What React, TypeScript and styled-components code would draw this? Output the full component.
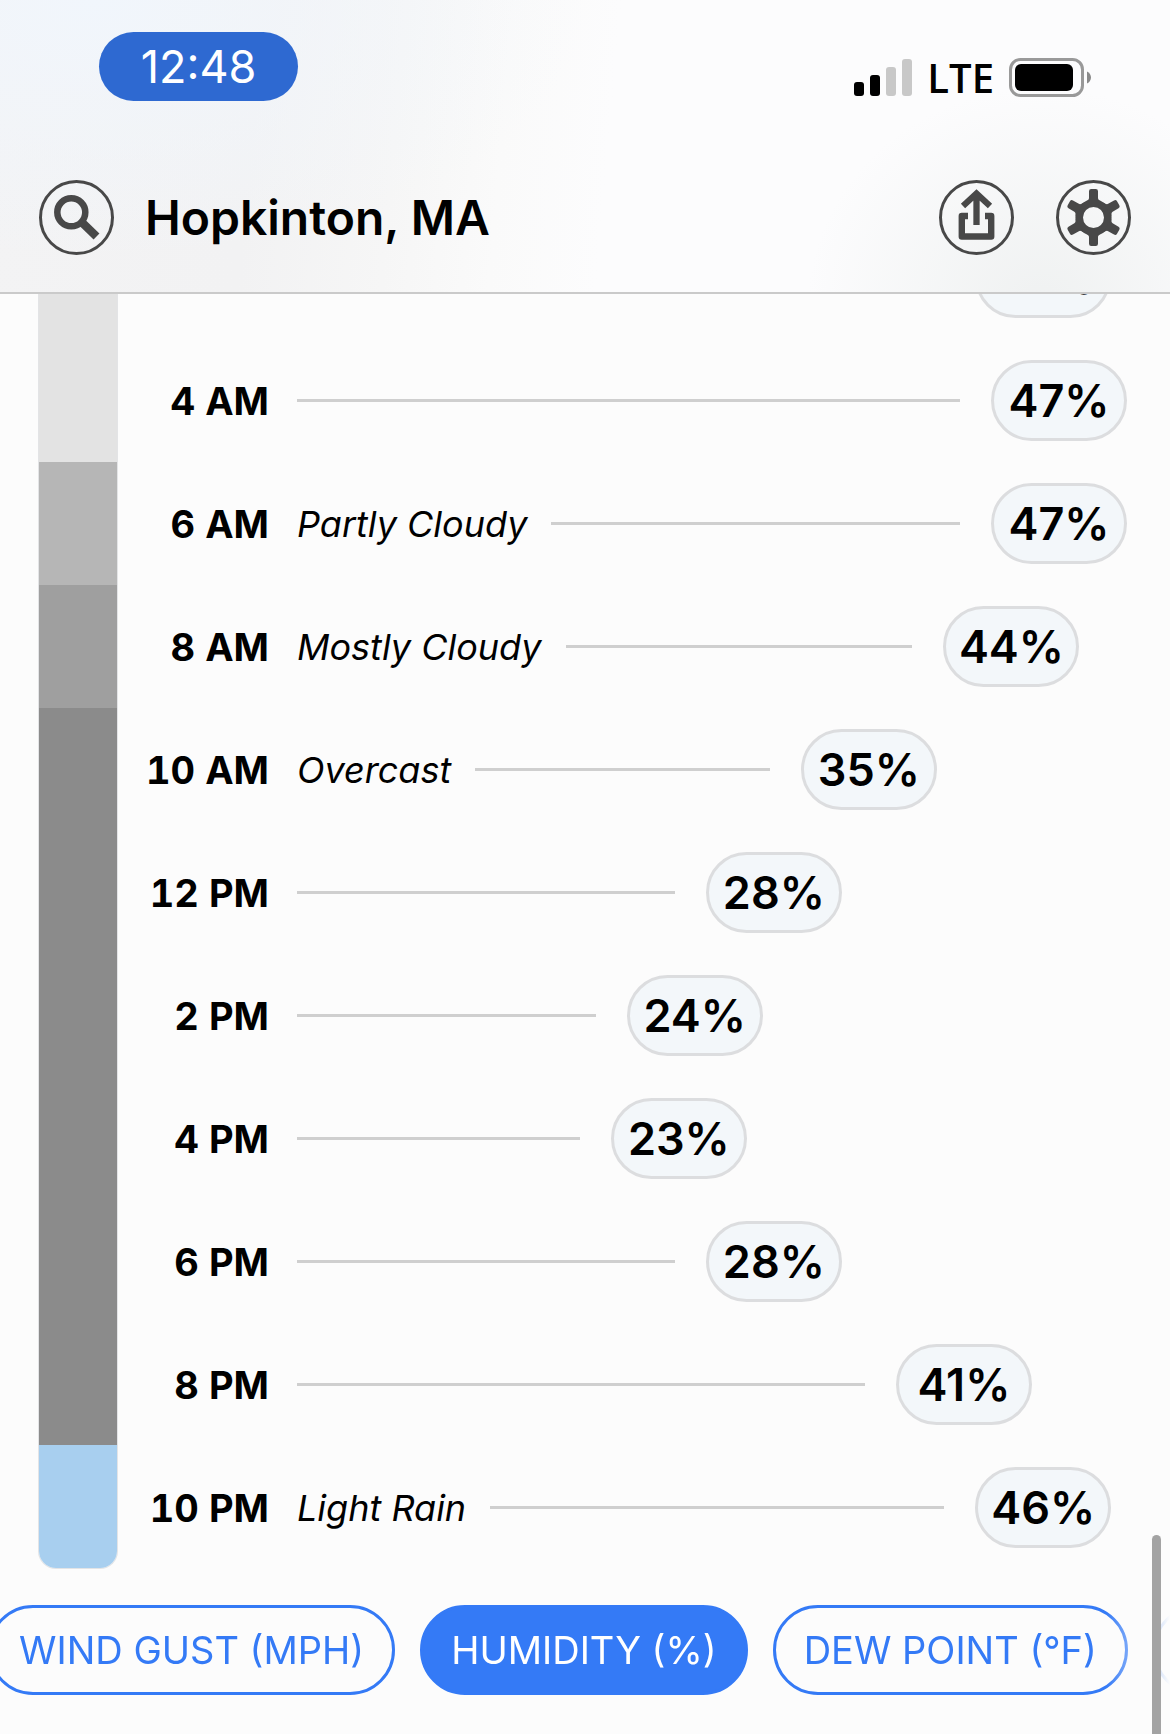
import React, { useState } from "react";
import styled, { createGlobalStyle } from "styled-components";

const GlobalStyle = createGlobalStyle`
  *, *::before, *::after { box-sizing: border-box; }
  body {
    margin: 0;
    background: #fcfcfc;
    color: #000;
    font-family: Inter, "Liberation Sans", sans-serif;
  }
  button { font: inherit; color: inherit; cursor: pointer; }
`;

const Screen = styled.div`
  position: relative;
  min-height: 100vh;
  overflow: hidden;
`;

const Header = styled.header`
  position: relative;
  z-index: 1;
  border-bottom: 2px solid #cacaca;
  background:
    radial-gradient(ellipse 20% 75% at 89% 105%, #eff1f1 0%, rgba(239, 241, 241, 0) 100%),
    radial-gradient(ellipse 42% 90% at 8% 0%, #f1f6fc 0%, rgba(241, 246, 252, 0) 100%),
    linear-gradient(95deg, #f3f3f4 0%, #f2f2f3 22%, #f6f6f6 34%, #fafafa 43%, #fcfcfd 52%, #fcfcfd 100%);
`;

const StatusBar = styled.div`
  display: flex;
  justify-content: space-between;
  align-items: flex-end;
  padding: 32px 79px 0 99px;
`;

const Clock = styled.time`
  display: flex;
  align-items: center;
  justify-content: center;
  width: 199px;
  height: 69px;
  border-radius: 35px;
  background: #2e69d1;
  color: #fff;
  font-size: 45px;
`;

const StatusIcons = styled.div`
  display: flex;
  align-items: center;
  gap: 15px;
  margin-bottom: 4px;
`;

const Network = styled.span`
  font-family: "Open Sans", "Noto Sans", sans-serif;
  font-size: 40px;
  font-weight: 600;
  line-height: 39px;
`;

const NavBar = styled.div`
  display: flex;
  align-items: center;
  padding: 79px 39px 37px;
`;

const Place = styled.h1`
  flex: 1;
  margin: 0 0 0 31px;
  font-size: 48px;
  font-weight: 600;
  line-height: 56px;
`;

const Actions = styled.div`
  display: flex;
  gap: 42px;
`;

const IconButton = styled.button`
  display: block;
  width: 75px;
  height: 75px;
  padding: 0;
  border: 0;
  border-radius: 50%;
  background: none;
`;

const Forecast = styled.section`
  display: flex;
  margin-top: -78px;
  padding: 0 43px 0 38px;
`;

const SkyBar = styled.div`
  display: flex;
  flex-direction: column;
  width: 80px;
  flex: none;
  overflow: hidden;
  border: 1px solid #e3e4e6;
  border-top: 0;
  border-radius: 0 0 18px 18px;
`;

const Sky = styled.div<{ $hours: number; $color: string }>`
  flex: ${(p) => p.$hours} 0 0;
  background: ${(p) => p.$color};
`;

const Hours = styled.ol`
  flex: 1;
  margin: 0;
  padding: 0;
  list-style: none;
`;

const Hour = styled.li`
  display: flex;
  align-items: center;
  height: 123px;
`;

const HourLabel = styled.span`
  flex: none;
  width: 151px;
  margin-right: 28px;
  font-size: 38px;
  font-weight: 700;
  font-variant-numeric: tabular-nums;
  text-align: right;
  white-space: nowrap;
`;

const Track = styled.div`
  flex: 1;
`;

const Reading = styled.div`
  display: flex;
  align-items: center;
`;

const Condition = styled.em`
  margin-right: 24px;
  font-size: 36px;
  font-style: italic;
  line-height: 44px;
  white-space: nowrap;
`;

const Rule = styled.span`
  flex: 1;
  height: 3px;
  margin-right: 31px;
  background: #cfcfcf;
`;

const Value = styled.span`
  display: flex;
  flex: none;
  align-items: center;
  justify-content: center;
  width: 136px;
  height: 81px;
  border: 3px solid #dcdddf;
  border-radius: 41px;
  background: #f3f7fa;
  font-size: 45px;
  font-weight: 600;
`;

const Metrics = styled.nav`
  display: flex;
  gap: 25px;
  margin: 36px 0 39px;
  overflow: hidden;
  mask-image: linear-gradient(90deg, #000 calc(100% - 64px), transparent 100%);
`;

const Metric = styled.button<{ $active: boolean }>`
  flex: none;
  height: 90px;
  padding: 0 28px;
  border: 3px solid #347af6;
  border-radius: 45px;
  background: ${(p) => (p.$active ? "#347af6" : "transparent")};
  color: ${(p) => (p.$active ? "#fff" : "#347af6")};
  font-size: 38px;
  white-space: nowrap;

  &:first-child {
    margin-left: -12px;
  }
`;

const ScrollThumb = styled.div`
  position: absolute;
  top: 1535px;
  right: 9px;
  bottom: 0;
  width: 9px;
  border-radius: 5px 5px 0 0;
  background: #a3a3a3;
`;

const skies = [
  { rows: 2, color: "#e3e3e3" },
  { rows: 1, color: "#b6b6b6" },
  { rows: 1, color: "#9f9f9f" },
  { rows: 6, color: "#8b8b8b" },
  { rows: 1, color: "#a8cfef" },
];

interface HourReading {
  time: string;
  value: number;
  level: number;
  condition?: string;
}

const hours: HourReading[] = [
  { time: "2 AM", value: 46, level: 46 },
  { time: "4 AM", value: 47, level: 47 },
  { time: "6 AM", value: 47, level: 47, condition: "Partly Cloudy" },
  { time: "8 AM", value: 44, level: 44, condition: "Mostly Cloudy" },
  { time: "10 AM", value: 35, level: 35, condition: "Overcast" },
  { time: "12 PM", value: 28, level: 29 },
  { time: "2 PM", value: 24, level: 24 },
  { time: "4 PM", value: 23, level: 23 },
  { time: "6 PM", value: 28, level: 29 },
  { time: "8 PM", value: 41, level: 41 },
  { time: "10 PM", value: 46, level: 46, condition: "Light Rain" },
];

const LOW = 23;
const HIGH = 47;
const LOW_WIDTH = 54.2;

const readingWidth = (level: number) =>
  `${LOW_WIDTH + ((level - LOW) / (HIGH - LOW)) * (100 - LOW_WIDTH)}%`;

const metrics = ["WIND GUST (MPH)", "HUMIDITY (%)", "DEW POINT (°F)", "PRESSURE (IN)"];

const SignalIcon = () => (
  <svg width="58" height="37" viewBox="0 0 58 37" aria-hidden="true">
    <rect x="0" y="23" width="10" height="14" rx="3" />
    <rect x="16" y="16" width="10" height="21" rx="3" />
    <rect x="32" y="8" width="10" height="29" rx="3" fill="#c8c8c8" />
    <rect x="48" y="0" width="10" height="37" rx="3" fill="#c8c8c8" />
  </svg>
);

const BatteryIcon = () => (
  <svg width="82" height="39" viewBox="0 0 82 39" aria-hidden="true">
    <rect x="1.5" y="1.5" width="72" height="36" rx="10" fill="none" stroke="#999" strokeWidth="3" />
    <rect x="6" y="6" width="58" height="27" rx="6" />
    <path d="M78 13.5c2.500 1 4 3.500 4 6s-1.500 5-4 6z" fill="#8a8a8a" />
  </svg>
);

const RoundIcon = ({ children }: { children: React.ReactNode }) => (
  <svg width="75" height="75" viewBox="0 0 75 75" fill="none" stroke="#484848" aria-hidden="true">
    <circle cx="37.5" cy="37.5" r="36" strokeWidth="3" />
    {children}
  </svg>
);

const SearchIcon = () => (
  <RoundIcon>
    <circle cx="32.3" cy="32.3" r="14" strokeWidth="6.500" />
    <path d="M42 41.500L57.500 56.500" strokeWidth="8.400" />
  </RoundIcon>
);

const ShareIcon = () => (
  <RoundIcon>
    <path d="M24 26L37.500 13.500L51 26M37.500 13V45" strokeWidth="6.300" />
    <path d="M29 36H22.800V56.500H52.200V36H46" strokeWidth="6.400" strokeLinejoin="round" />
  </RoundIcon>
);

const GearIcon = () => (
  <RoundIcon>
    <circle cx="37.5" cy="37.5" r="14.3" strokeWidth="7.600" />
    {[0, 60, 120, 180, 240, 300].map((angle) => (
      <path
        key={angle}
        d="M35.200 9h4.600q2.200 0 2.200 2.200v6.800q0 2 3.500 3.500H29.500q3.500-1.500 3.500-3.500v-6.800q0-2.200 2.200-2.200z"
        fill="#484848"
        stroke="none"
        transform={`rotate(${angle} 37.5 37.5)`}
      />
    ))}
  </RoundIcon>
);

export default function App() {
  const [metric, setMetric] = useState("HUMIDITY (%)");

  return (
    <>
      <GlobalStyle />
      <Screen>
        <Header>
          <StatusBar>
            <Clock>12:48</Clock>
            <StatusIcons>
              <SignalIcon />
              <Network>LTE</Network>
              <BatteryIcon />
            </StatusIcons>
          </StatusBar>
          <NavBar>
            <IconButton type="button" aria-label="Search">
              <SearchIcon />
            </IconButton>
            <Place>Hopkinton, MA</Place>
            <Actions>
              <IconButton type="button" aria-label="Share">
                <ShareIcon />
              </IconButton>
              <IconButton type="button" aria-label="Settings">
                <GearIcon />
              </IconButton>
            </Actions>
          </NavBar>
        </Header>

        <main>
          <Forecast aria-label="Hourly forecast">
            <SkyBar aria-hidden="true">
              {skies.map((sky) => (
                <Sky key={sky.color} $hours={sky.rows} $color={sky.color} />
              ))}
            </SkyBar>
            <Hours>
              {hours.map((hour) => (
                <Hour key={hour.time}>
                  <HourLabel>{hour.time}</HourLabel>
                  <Track>
                    <Reading style={{ width: readingWidth(hour.level) }}>
                      {hour.condition && <Condition>{hour.condition}</Condition>}
                      <Rule />
                      <Value>{hour.value}%</Value>
                    </Reading>
                  </Track>
                </Hour>
              ))}
            </Hours>
          </Forecast>

          <Metrics aria-label="Metric">
            {metrics.map((name) => (
              <Metric
                key={name}
                type="button"
                $active={name === metric}
                aria-pressed={name === metric}
                onClick={() => setMetric(name)}
              >
                {name}
              </Metric>
            ))}
          </Metrics>
        </main>
        <ScrollThumb />
      </Screen>
    </>
  );
}
